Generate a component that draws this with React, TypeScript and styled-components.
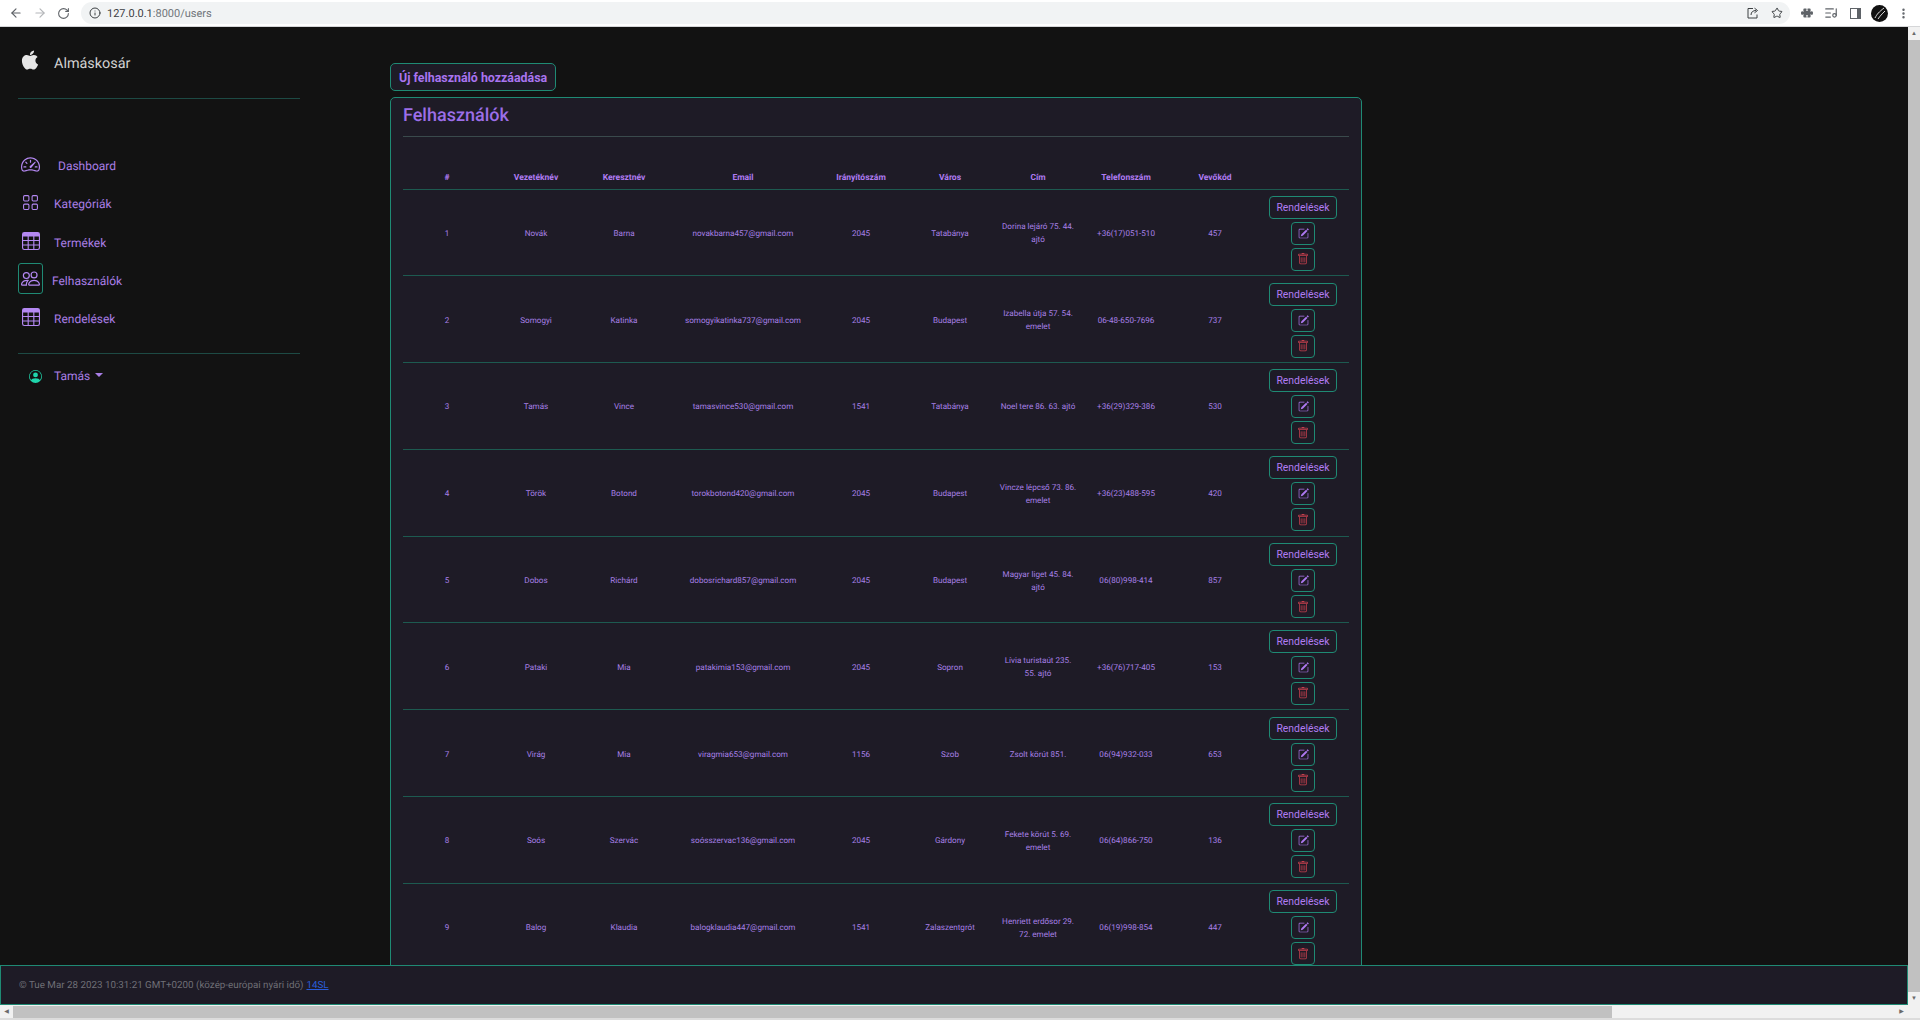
import styled, { createGlobalStyle } from 'styled-components';
import { ArrowLeft, ArrowRight, RotateCw, Info, Star, ListMusic, MoreVertical } from 'lucide-react';
import {
  BsPuzzleFill,
  BsSpeedometer2,
  BsGrid,
  BsTable,
  BsPeople,
  BsPersonCircle,
  BsPencilSquare,
  BsTrash,
} from 'react-icons/bs';
import { FaApple } from 'react-icons/fa';

const GlobalStyle = createGlobalStyle`
  html, body {
    margin: 0;
    height: 100%;
    overflow: hidden;
    background: #121212;
  }
  * { box-sizing: border-box; }
  body {
    font-family: Roboto, "Open Sans", "Liberation Sans", sans-serif;
    text-rendering: geometricPrecision;
  }
`;

const Window = styled.div`
  display: flex;
  flex-direction: column;
  width: 1920px;
  height: 1020px;
  overflow: hidden;
`;

const Toolbar = styled.div`
  display: flex;
  align-items: center;
  flex: 0 0 27px;
  padding-left: 9px;
  background: #fff;
  border-bottom: 1px solid #d5d6d8;
  color: #5f6368;
`;

const NavButton = styled.span<{ $off?: boolean }>`
  display: flex;
  width: 24px;
  color: ${(props) => (props.$off ? '#b4b6b9' : '#5f6368')};
`;

const AddressBar = styled.div`
  display: flex;
  align-items: center;
  gap: 6px;
  flex: 1;
  height: 22px;
  padding: 0 7px 0 8px;
  border-radius: 11px;
  background: #f1f3f4;
  font-size: 11px;
  color: #3c4043;
`;

const Dim = styled.span`
  color: #70757a;
`;

const AddressRight = styled.div`
  display: flex;
  align-items: center;
  gap: 12px;
  margin-left: auto;
`;

const Extensions = styled.div`
  display: flex;
  align-items: center;
  padding: 0 5px;
  color: #5f6368;
`;

const ExtSlot = styled.span`
  display: flex;
  align-items: center;
  justify-content: center;
  width: 24px;
`;

const Avatar = styled.span`
  display: block;
  width: 17px;
  height: 17px;
  border-radius: 50%;
  overflow: hidden;
`;

const Viewport = styled.div`
  display: flex;
  flex: 1;
  min-height: 0;
`;

const Page = styled.div`
  position: relative;
  display: flex;
  flex: 1;
  min-width: 0;
  overflow: hidden;
  background: #121212;
`;

const Sidebar = styled.aside`
  flex: 0 0 390px;
  padding: 15px 90px 0 18px;
`;

const Brand = styled.div`
  display: flex;
  align-items: center;
  gap: 13px;
  height: 40px;
  padding-left: 1px;
  font-size: 14.4px;
  color: #d2d2d2;
  span { margin-top: 2px; }
  svg {
    margin-top: -4px;
    color: #e6e6e6;
  }
`;

const Divider = styled.div`
  height: 1px;
  background: #1d4a44;
`;

const BrandDivider = styled(Divider)`
  margin-top: 16px;
`;

const Nav = styled.nav`
  display: flex;
  flex-direction: column;
  margin-top: 48px;
  margin-bottom: 15px;
`;

const NavItem = styled.a<{ $gap?: number }>`
  display: flex;
  align-items: center;
  height: 38.25px;
  gap: ${(props) => props.$gap ?? 11}px;
  font-size: 12px;
  color: #a97ee6;
`;

const NavIcon = styled.span<{ $active?: boolean }>`
  display: flex;
  align-items: center;
  justify-content: center;
  width: 25px;
  height: 31px;
  margin-top: -5px;
  padding-top: ${(props) => (props.$active ? '0' : '1px')};
  border: 1px solid ${(props) => (props.$active ? '#1f8a74' : 'transparent')};
  border-radius: 3px;
  color: #b488f2;
`;

const UserRow = styled.div`
  display: flex;
  align-items: center;
  height: 44px;
  padding-left: 11px;
  gap: 12px;
  font-size: 12px;
  color: #a97ee6;
  svg { color: #1fd6ac; }
`;

const Caret = styled.span`
  width: 0;
  height: 0;
  margin-left: -7px;
  margin-bottom: 2px;
  border-left: 4px solid transparent;
  border-right: 4px solid transparent;
  border-top: 4px solid #a97ee6;
`;

const Main = styled.main`
  flex: 0 0 972px;
  padding-top: 36px;
`;

const AddButton = styled.button`
  display: block;
  height: 28px;
  padding: 0 8px;
  border: 1px solid #1f8a74;
  border-radius: 5px;
  background: #1e1b26;
  font: 700 12.4px Roboto, sans-serif;
  color: #a974f0;
`;

const Card = styled.section`
  margin-top: 6px;
  padding: 5px 12px 0;
  border: 1px solid #1f8a74;
  border-radius: 5px;
  background: #1e1b26;
`;

const Title = styled.h1`
  margin: 0;
  padding-bottom: 7px;
  font-size: 18px;
  font-weight: 500;
  line-height: 26px;
  color: #9c6ee8;
  border-bottom: 1px solid #3a4a4c;
`;

const Table = styled.table`
  width: 946px;
  margin-top: 19px;
  border-collapse: collapse;
  table-layout: fixed;
`;

const Th = styled.th`
  height: 33px;
  padding: 0 0 5px;
  vertical-align: bottom;
  border-bottom: 1px solid #1d5a50;
  font-size: 8.5px;
  font-weight: 700;
  line-height: 11px;
  text-align: center;
  color: #b07cf2;
`;

const Td = styled.td`
  height: 86.8px;
  padding: 2px 2px 0;
  border-bottom: 1px solid #1d5a50;
  font-size: 8.1px;
  line-height: 13px;
  text-align: center;
  color: #a880e6;
`;

const Actions = styled.div`
  display: flex;
  flex-direction: column;
  align-items: center;
  gap: 3px;
`;

const OrdersButton = styled.button`
  height: 23px;
  padding: 0 6px;
  border: 1px solid #1f8a74;
  border-radius: 4px;
  background: transparent;
  font: 400 10.4px Roboto, sans-serif;
  color: #b07cf2;
`;

const IconButton = styled.button<{ $danger?: boolean }>`
  display: flex;
  align-items: center;
  justify-content: center;
  width: 24px;
  height: 23px;
  padding: 0;
  border: 1px solid #1f8a74;
  border-radius: 4px;
  background: transparent;
  color: ${(props) => (props.$danger ? '#c8404e' : '#ae78f0')};
`;

const Footer = styled.footer`
  position: absolute;
  left: 0;
  right: 0;
  bottom: 0;
  display: flex;
  align-items: center;
  gap: 3px;
  height: 40px;
  padding-left: 18px;
  border: 1px solid #1f8a74;
  background: #1e1b26;
  font-size: 9.8px;
  color: #6f6f76;
`;

const FooterLink = styled.a`
  color: #2a5bd7;
  text-decoration: underline;
`;

const VScroll = styled.div`
  display: flex;
  flex-direction: column;
  flex: 0 0 12px;
  background: #f1f1f1;
`;

const ScrollArrow = styled.span`
  display: block;
  flex: 0 0 13px;
  text-align: center;
  font-size: 6px;
  line-height: 13px;
  color: #6a6a6a;
`;

const VThumb = styled.div`
  flex: 1;
  background: #c1c1c1;
`;

const HScroll = styled.div`
  display: flex;
  align-items: center;
  flex: 0 0 14px;
  background: #f1f1f1;
  border-bottom: 2px solid #dcdcdc;
`;

const HThumb = styled.div`
  flex: 0 0 1599px;
  height: 12px;
  background: #c1c1c1;
`;

const HEnd = styled(ScrollArrow)`
  margin-left: auto;
  margin-right: 12px;
`;

const columns = [88, 90, 86, 152, 84, 94, 82, 94, 84, 92];
const headers = ['#', 'Vezetéknév', 'Keresztnév', 'Email', 'Irányítószám', 'Város', 'Cím', 'Telefonszám', 'Vevőkód', ''];

const users = [
  ['1', 'Novák', 'Barna', 'novakbarna457@gmail.com', '2045', 'Tatabánya', 'Dorina lejáró 75. 44. ajtó', '+36(17)051-510', '457'],
  ['2', 'Somogyi', 'Katinka', 'somogyikatinka737@gmail.com', '2045', 'Budapest', 'Izabella útja 57. 54. emelet', '06-48-650-7696', '737'],
  ['3', 'Tamás', 'Vince', 'tamasvince530@gmail.com', '1541', 'Tatabánya', 'Noel tere 86. 63. ajtó', '+36(29)329-386', '530'],
  ['4', 'Török', 'Botond', 'torokbotond420@gmail.com', '2045', 'Budapest', 'Vincze lépcső 73. 86. emelet', '+36(23)488-595', '420'],
  ['5', 'Dobos', 'Richárd', 'dobosrichard857@gmail.com', '2045', 'Budapest', 'Magyar liget 45. 84. ajtó', '06(80)998-414', '857'],
  ['6', 'Pataki', 'Mia', 'patakimia153@gmail.com', '2045', 'Sopron', 'Lívia turistaút 235. 55. ajtó', '+36(76)717-405', '153'],
  ['7', 'Virág', 'Mia', 'viragmia653@gmail.com', '1156', 'Szob', 'Zsolt körút 851.', '06(94)932-033', '653'],
  ['8', 'Soós', 'Szervác', 'soósszervac136@gmail.com', '2045', 'Gárdony', 'Fekete körút 5. 69. emelet', '06(64)866-750', '136'],
  ['9', 'Balog', 'Klaudia', 'balogklaudia447@gmail.com', '1541', 'Zalaszentgrót', 'Henriett erdősor 29. 72. emelet', '06(19)998-854', '447'],
];

export default function App() {
  return (
    <Window>
      <GlobalStyle />
      <Toolbar>
        <NavButton><ArrowLeft size={14} /></NavButton>
        <NavButton $off><ArrowRight size={14} /></NavButton>
        <NavButton><RotateCw size={13} /></NavButton>
        <AddressBar>
          <Info size={12} />
          <span>127.0.0.1<Dim>:8000/users</Dim></span>
          <AddressRight>
            <svg width="12" height="12" viewBox="0 0 12 12" fill="none" stroke="currentColor">
              <path d="M6 1.5H1v9.5h9V7.5" />
              <path d="M4 8c0-3 2-4.5 5-4.5M7.5 1.2l3 2.3-3 2.3" />
            </svg>
            <Star size={12} />
          </AddressRight>
        </AddressBar>
        <Extensions>
          <ExtSlot><BsPuzzleFill size={12} /></ExtSlot>
          <ExtSlot><ListMusic size={14} /></ExtSlot>
          <ExtSlot>
            <svg width="11" height="11" viewBox="0 0 11 11">
              <rect x="0.5" y="0.5" width="10" height="10" fill="none" stroke="currentColor" />
              <rect x="7" y="0.5" width="3.5" height="10" fill="currentColor" />
            </svg>
          </ExtSlot>
          <ExtSlot>
            <Avatar>
              <svg width="17" height="17" viewBox="0 0 17 17">
                <rect width="17" height="17" fill="#111" />
                <path d="M4 13 C6 9 8 7 13 3 M7 14 C9 11 11 9 14 6" stroke="#ddd" strokeWidth="1" fill="none" />
              </svg>
            </Avatar>
          </ExtSlot>
          <ExtSlot><MoreVertical size={13} strokeWidth={2.5} /></ExtSlot>
        </Extensions>
      </Toolbar>
      <Viewport>
        <Page>
          <Sidebar>
            <Brand>
              <FaApple size={22} />
              <span>Almáskosár</span>
            </Brand>
            <BrandDivider />
            <Nav>
              <NavItem $gap={15}><NavIcon><BsSpeedometer2 size={19} /></NavIcon>Dashboard</NavItem>
              <NavItem><NavIcon><BsGrid size={17} /></NavIcon>Kategóriák</NavItem>
              <NavItem><NavIcon><BsTable size={18} /></NavIcon>Termékek</NavItem>
              <NavItem $gap={9}><NavIcon $active><BsPeople size={19} /></NavIcon>Felhasználók</NavItem>
              <NavItem><NavIcon><BsTable size={18} /></NavIcon>Rendelések</NavItem>
            </Nav>
            <Divider />
            <UserRow>
              <BsPersonCircle size={13} />
              <span>Tamás</span>
              <Caret />
            </UserRow>
          </Sidebar>
          <Main>
            <AddButton type="button">Új felhasználó hozzáadása</AddButton>
            <Card>
              <Title>Felhasználók</Title>
              <Table>
                <colgroup>
                  {columns.map((width, i) => <col key={i} width={width} />)}
                </colgroup>
                <thead>
                  <tr>
                    {headers.map((header) => <Th key={header}>{header}</Th>)}
                  </tr>
                </thead>
                <tbody>
                  {users.map((user) => (
                    <tr key={user[0]}>
                      {user.map((value, i) => <Td key={i}>{value}</Td>)}
                      <Td>
                        <Actions>
                          <OrdersButton type="button">Rendelések</OrdersButton>
                          <IconButton type="button"><BsPencilSquare size={11} /></IconButton>
                          <IconButton type="button" $danger><BsTrash size={12} /></IconButton>
                        </Actions>
                      </Td>
                    </tr>
                  ))}
                </tbody>
              </Table>
            </Card>
          </Main>
          <Footer>
            <span>© Tue Mar 28 2023 10:31:21 GMT+0200 (közép-európai nyári idő)</span>
            <FooterLink>14SL</FooterLink>
          </Footer>
        </Page>
        <VScroll>
          <ScrollArrow>▲</ScrollArrow>
          <VThumb />
          <ScrollArrow>▼</ScrollArrow>
        </VScroll>
      </Viewport>
      <HScroll>
        <ScrollArrow>◀</ScrollArrow>
        <HThumb />
        <HEnd>▶</HEnd>
      </HScroll>
    </Window>
  );
}
